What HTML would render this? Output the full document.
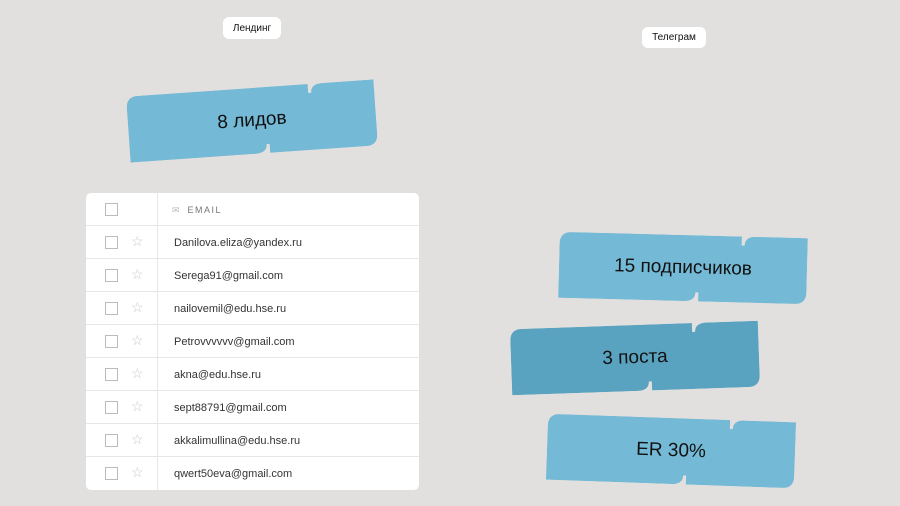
<!DOCTYPE html>
<html><head><meta charset="utf-8"><style>
body{margin:0;width:900px;height:506px;background:#e2e0de;position:relative;overflow:hidden;font-family:"Liberation Sans",sans-serif}
.pill{position:absolute;background:#fff;border-radius:6px;font-size:10px;color:#111;display:flex;align-items:center;justify-content:center}
.sh{position:absolute;width:248px;height:66px}
.sh svg{position:absolute;left:0;top:0}
.sh span{position:absolute;left:0;right:0;top:0;bottom:0;display:flex;align-items:center;justify-content:center;font-size:19px;color:#111}
.tbl{position:absolute;left:86px;top:193px;width:333px;height:297px;background:#fff;border-radius:5px;overflow:hidden}
.row{height:33px;border-bottom:1px solid #e6e6e6;box-sizing:border-box;position:relative}
.row:last-child{border-bottom:none}
.cb{position:absolute;left:19px;top:10px;width:11px;height:11px;border:1px solid #bbb}
.st{position:absolute;left:45px;top:7px;font-size:14px;color:#c8c8c8}
.tx{position:absolute;left:88px;top:11px;font-size:11px;color:#333}
.div{position:absolute;left:71px;top:0;bottom:0;width:1px;background:#e6e6e6}
</style></head><body>
<div class="pill" style="left:223px;top:17px;width:58px;height:22px">Лендинг</div>
<div class="pill" style="left:642px;top:27px;width:64px;height:21px">Телеграм</div>

<svg width="0" height="0" style="position:absolute"><defs><path id="s" d="M12,0 H182 V9 H185 Q185,0 197,0 H248 V54 Q248,66 236,66 H140 V57 H137 Q137,66 125,66 H0 V12 Q0,0 12,0 Z"/></defs></svg>

<div class="sh" style="left:128px;top:88px;transform:rotate(-4deg)"><svg width="248" height="66"><use href="#s" fill="#74b9d5"/></svg><span>8 лидов</span></div>
<div class="sh" style="left:559px;top:235px;transform:rotate(1.5deg)"><svg width="248" height="66"><use href="#s" fill="#74b9d5"/></svg><span>15 подписчиков</span></div>
<div class="sh" style="left:511px;top:325px;transform:rotate(-2deg)"><svg width="248" height="66"><use href="#s" fill="#5aa3c0"/></svg><span>3 поста</span></div>
<div class="sh" style="left:547px;top:418px;transform:rotate(2deg)"><svg width="248" height="66"><use href="#s" fill="#74b9d5"/></svg><span>ER 30%</span></div>

<div class="tbl">
<div class="div"></div>
<div class="row"><div class="cb"></div><div class="tx" style="font-size:9px;letter-spacing:1.5px;color:#777;top:12px"><span style="color:#bbb;letter-spacing:0;margin-left:-2px">✉</span>&nbsp; EMAIL</div></div>
<div class="row"><div class="cb"></div><div class="st">☆</div><div class="tx">Danilova.eliza@yandex.ru</div></div>
<div class="row"><div class="cb"></div><div class="st">☆</div><div class="tx">Serega91@gmail.com</div></div>
<div class="row"><div class="cb"></div><div class="st">☆</div><div class="tx">nailovemil@edu.hse.ru</div></div>
<div class="row"><div class="cb"></div><div class="st">☆</div><div class="tx">Petrovvvvvv@gmail.com</div></div>
<div class="row"><div class="cb"></div><div class="st">☆</div><div class="tx">akna@edu.hse.ru</div></div>
<div class="row"><div class="cb"></div><div class="st">☆</div><div class="tx">sept88791@gmail.com</div></div>
<div class="row"><div class="cb"></div><div class="st">☆</div><div class="tx">akkalimullina@edu.hse.ru</div></div>
<div class="row"><div class="cb"></div><div class="st">☆</div><div class="tx">qwert50eva@gmail.com</div></div>
</div>
</body></html>
